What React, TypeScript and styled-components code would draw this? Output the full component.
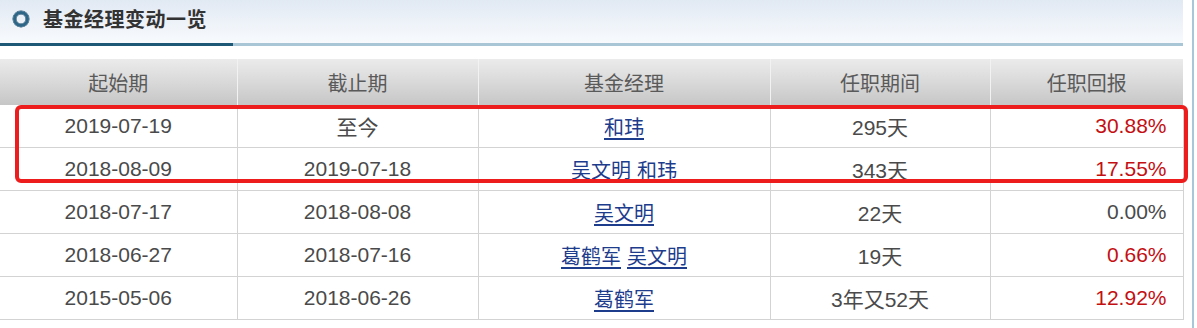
import React from "react";
import styled, { createGlobalStyle } from "styled-components";

const Global = createGlobalStyle`
  html, body { margin: 0; padding: 0; background: #fff; }
  body { font-family: "Liberation Sans", "Noto Sans CJK SC", sans-serif; }
`;

const Page = styled.div`
  width: 1194px;
  height: 328px;
  box-sizing: border-box;
  border-right: 2px solid #a9c7db;
  padding-right: 9px;
`;

const Panel = styled.div`
  width: 1183px;
`;

const TitleBar = styled.div`
  height: 43px;
  display: flex;
  align-items: center;
  gap: 14px;
  padding-left: 13px;
  background: linear-gradient(to bottom, #e1e9f3 0%, #eef3f9 55%, #f8fafd 100%);
  border-bottom: 3px solid #a9c6d6;
  position: relative;
  &::after {
    content: "";
    position: absolute;
    left: 0;
    bottom: -3px;
    width: 233px;
    height: 3px;
    background: #1d5877;
  }
`;

const Ring = styled.span`
  width: 10px;
  height: 10px;
  border-radius: 50%;
  border: 3px solid #2e6688;
  box-shadow: 0 0 0 0.5px #1d4a66, inset 0 0 0 0.5px #1d4a66;
  margin-top: -6px;
  flex: none;
`;

const Title = styled.h2`
  margin: -6px 0 0 0;
  font-family: "Noto Sans CJK SC", sans-serif;
  font-size: 20px;
  font-weight: 700;
  color: #333;
  letter-spacing: 0.5px;
`;

const TableWrap = styled.div`
  position: relative;
  margin-top: 13px;
`;

const Table = styled.table`
  width: 1183px;
  border-collapse: collapse;
  table-layout: fixed;
`;

const Th = styled.th`
  height: 46px;
  padding: 0;
  font-family: "Noto Sans CJK SC", sans-serif;
  font-weight: 400;
  font-size: 20px;
  color: #5a5a5a;
  text-align: center;
  background: linear-gradient(to bottom, #ebebeb 0%, #d9d9d9 50%, #c6c6c6 100%);
  border-right: 1px solid #f2f2f2;
  &:last-child { border-right: none; }
`;

const Td = styled.td<{ $align?: "center" | "right"; $red?: boolean }>`
  height: 42px;
  padding: 0 ${(p) => (p.$align === "right" ? "16px" : "0")} 0 0;
  font-size: 21px;
  color: ${(p) => (p.$red ? "#c40f12" : "#4a4a4a")};
  text-align: ${(p) => p.$align ?? "center"};
  border-bottom: 1px solid #d3d3d3;
  border-right: 1px solid #d3d3d3;
  white-space: nowrap;
`;

const Link = styled.a`
  color: #1e3c8c;
  text-decoration: underline;
  text-underline-offset: 3px;
  font-family: "Noto Sans CJK SC", sans-serif;
  font-size: 20px;
  & + & { margin-left: 6px; }
`;

const Highlight = styled.div`
  position: absolute;
  left: 15px;
  top: 46px;
  width: 1173px;
  height: 78px;
  box-sizing: border-box;
  border: 4px solid #ee1d1d;
  border-radius: 6px;
  pointer-events: none;
`;

type Row = {
  start: string;
  end: string;
  managers: string[];
  period: string;
  ret: string;
  red: boolean;
};

const rows: Row[] = [
  { start: "2019-07-19", end: "至今", managers: ["和玮"], period: "295天", ret: "30.88%", red: true },
  { start: "2018-08-09", end: "2019-07-18", managers: ["吴文明", "和玮"], period: "343天", ret: "17.55%", red: true },
  { start: "2018-07-17", end: "2018-08-08", managers: ["吴文明"], period: "22天", ret: "0.00%", red: false },
  { start: "2018-06-27", end: "2018-07-16", managers: ["葛鹤军", "吴文明"], period: "19天", ret: "0.66%", red: true },
  { start: "2015-05-06", end: "2018-06-26", managers: ["葛鹤军"], period: "3年又52天", ret: "12.92%", red: true },
];

export default function App() {
  return (
    <Page>
      <Global />
      <Panel>
        <TitleBar>
          <Ring />
          <Title>基金经理变动一览</Title>
        </TitleBar>
        <TableWrap>
          <Table>
            <colgroup>
              <col style={{ width: 237 }} />
              <col style={{ width: 241 }} />
              <col style={{ width: 292 }} />
              <col style={{ width: 220 }} />
              <col style={{ width: 193 }} />
            </colgroup>
            <thead>
              <tr>
                <Th>起始期</Th>
                <Th>截止期</Th>
                <Th>基金经理</Th>
                <Th>任职期间</Th>
                <Th>任职回报</Th>
              </tr>
            </thead>
            <tbody>
              {rows.map((r) => (
                <tr key={r.start}>
                  <Td>{r.start}</Td>
                  <Td>{r.end}</Td>
                  <Td>
                    {r.managers.map((m) => (
                      <Link key={m} href="#">
                        {m}
                      </Link>
                    ))}
                  </Td>
                  <Td>{r.period}</Td>
                  <Td $align="right" $red={r.red}>
                    {r.ret}
                  </Td>
                </tr>
              ))}
            </tbody>
          </Table>
          <Highlight />
        </TableWrap>
      </Panel>
    </Page>
  );
}
